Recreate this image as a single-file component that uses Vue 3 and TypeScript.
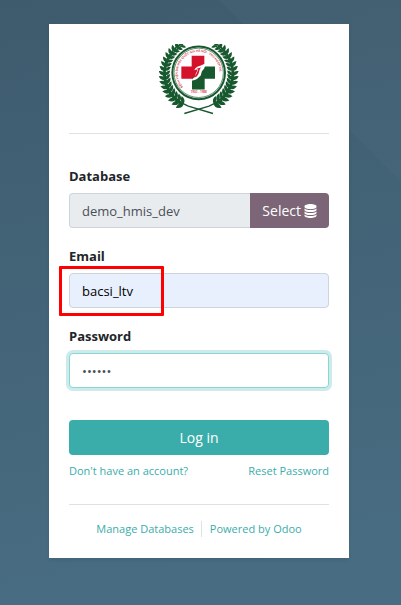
<script setup lang="ts">
import { ref } from 'vue'

interface Leaf {
  x: number
  y: number
  angle: number
  scale: number
}

const database = ref('demo_hmis_dev')
const email = ref('bacsi_ltv')
const password = ref('123456')

const centerX = 119
const centerY = 86

// Leaves of the left laurel branch, running from the foot up to the tip.
function buildBranch(): Leaf[] {
  const leaves: Leaf[] = []
  const count = 17
  for (let i = 0; i < count; i++) {
    const part = i / (count - 1)
    const degrees = 116 + part * 120
    const radians = (degrees * Math.PI) / 180
    const radius = 103 - part * 5
    const x = centerX + radius * Math.cos(radians)
    const y = centerY + radius * Math.sin(radians)
    const scale = 1.15 - part * 0.3
    leaves.push({ x, y, angle: degrees + 36, scale })
    leaves.push({ x, y, angle: degrees + 80, scale: scale * 0.8 })
    leaves.push({ x, y, angle: degrees + 140, scale: scale * 0.9 })
  }
  return leaves
}

const branch = buildBranch()
</script>

<template>
  <main class="page">
    <section class="card">
      <header class="brand">
        <svg class="logo" viewBox="0 0 240 212" role="img" aria-label="VNU Hospital">
          <defs>
            <path id="ring-text" d="M72 128 A63 63 0 1 1 166 128" />
            <g id="laurel">
              <path class="stem" d="M162 208 L88 186 Q24 160 18 86 Q22 34 68 6" />
              <path
                v-for="(leaf, index) in branch"
                :key="index"
                d="M0 0 Q9 -11 23 0 Q10 10 0 0Z"
                :transform="`translate(${leaf.x} ${leaf.y}) rotate(${leaf.angle}) scale(${leaf.scale})`"
              />
            </g>
          </defs>
          <g class="green">
            <use href="#laurel" />
            <use href="#laurel" transform="translate(238 0) scale(-1 1)" />
          </g>
          <circle class="ring" cx="119" cy="86" r="79" />
          <circle class="ring-thin" cx="119" cy="86" r="74" />
          <text class="ring-label"><textPath href="#ring-text">BỆNH VIỆN ĐẠI HỌC QUỐC GIA HÀ NỘI · VNU HOSPITAL</textPath></text>
          <path class="red" d="M98 35H136V66L102 104H67V67H98Z" />
          <path class="green" d="M136 67H168V104H137V136H99V104L118 86Z" />
          <path class="hand" d="M139 58 C125 66 111 65 106 78 L115 75 C116 83 108 87 110 95 C106 101 99 104 96 110 C108 109 116 105 121 98 C128 94 126 87 129 81 C134 75 138 73 139 58Z" />
          <path class="red" d="M113 74 L126 70 C119 78 122 88 113 97 L105 101 C114 91 113 84 118 77Z" />
          <text class="year" x="119" y="148">1902 - 1988</text>
        </svg>
      </header>

      <form class="form" @submit.prevent>
        <div class="field">
          <label for="database">Database</label>
          <div class="group">
            <input id="database" v-model="database" class="control locked" type="text" readonly />
            <button class="select" type="button">
              Select
              <svg class="stack" viewBox="0 0 12 14" aria-hidden="true">
                <path d="M0 2.2C0 1 2.7 0 6 0s6 1 6 2.2v.9C12 4.3 9.300 5.200 6 5.200S0 4.300 0 3.100z" />
                <path d="M0 4.600C1.300 5.600 3.600 6.100 6 6.100s4.700-.5 6-1.500V6C12 7.200 9.300 8.100 6 8.100S0 7.200 0 6z" />
                <path d="M0 7.500C1.300 8.500 3.600 9 6 9s4.700-.5 6-1.500v1.400C12 10.100 9.300 11 6 11S0 10.100 0 8.900z" />
                <path d="M0 10.400c1.300 1 3.600 1.500 6 1.500s4.700-.5 6-1.500v1.400C12 13 9.300 14 6 14s-6-1-6-2.200z" />
              </svg>
            </button>
          </div>
        </div>

        <div class="field">
          <label for="email">Email</label>
          <div class="marked">
            <input id="email" v-model="email" class="control filled" type="text" />
            <span class="marker"></span>
          </div>
        </div>

        <div class="field">
          <label for="password">Password</label>
          <input id="password" v-model="password" class="control active" type="password" />
        </div>

        <button class="login" type="submit">Log in</button>

        <nav class="links">
          <a href="#signup">Don't have an account?</a>
          <a href="#reset">Reset Password</a>
        </nav>
      </form>

      <footer class="footer">
        <a href="#databases">Manage Databases</a>
        <a class="powered" href="#odoo">Powered by Odoo</a>
      </footer>
    </section>
  </main>
</template>

<style>
body {
  margin: 0;
}
</style>

<style scoped>
.page,
.page * {
  box-sizing: border-box;
}

.page {
  min-height: 100vh;
  padding: 24px 3px 24px 0;
  background:
    linear-gradient(225deg, rgba(255, 255, 255, 0.02) 128px, transparent 129px),
    linear-gradient(170deg, #3e5b6d, #486c82 90%);
  font-family: 'Open Sans', 'Noto Sans', sans-serif;
  font-size: 14px;
  line-height: 21px;
  color: #212529;
}

.card {
  width: 300px;
  max-width: 100%;
  margin: 0 auto;
  padding: 20px;
  background: #fff;
  box-shadow: 0 2px 4px rgba(0, 0, 0, 0.08);
}

.brand {
  display: flex;
  justify-content: center;
  padding-bottom: 18px;
  border-bottom: 1px solid #dee2e6;
}

.logo {
  display: block;
  width: 80px;
  height: 71px;
}

.green {
  fill: #17582f;
}

.red {
  fill: #d5122b;
}

.stem {
  fill: none;
  stroke: #17582f;
  stroke-width: 4;
}

.ring {
  fill: #fff;
  stroke: #17582f;
  stroke-width: 6;
}

.ring-thin {
  fill: none;
  stroke: #17582f;
  stroke-width: 2;
}

.ring-label,
.year {
  fill: #d5122b;
  font-size: 9px;
  font-weight: 600;
}

.year {
  text-anchor: middle;
}

.hand {
  fill: #fff;
}

.form {
  display: flex;
  flex-direction: column;
  gap: 18px;
  padding-top: 32px;
}

.field {
  display: flex;
  flex-direction: column;
  gap: 6px;
}

label {
  font-size: 13px;
  font-weight: 700;
}

.control {
  width: 100%;
  min-width: 0;
  height: 35px;
  padding: 6px 12px;
  border: 1px solid #ced4da;
  border-radius: 4px;
  background: #fff;
  color: #495057;
  font: inherit;
  font-size: 13px;
  outline: none;
}

.group {
  display: flex;
}

.locked {
  flex: 1;
  border-right: 0;
  border-radius: 4px 0 0 4px;
  background: #e9ecef;
}

.filled {
  display: block;
  background: #e8f0fe;
  color: #000;
}

.active {
  border-color: #8ad6d4;
  box-shadow: 0 0 0 3px #cdebea;
}

.marked {
  position: relative;
}

.marker {
  position: absolute;
  top: -7px;
  left: -10px;
  width: 105px;
  height: 50px;
  border: 3px solid #f00;
  border-radius: 1px;
  pointer-events: none;
}

.select,
.login {
  height: 35px;
  padding: 6px 12px;
  border: 0;
  border-radius: 4px;
  color: #fff;
  font: inherit;
}

.select {
  display: flex;
  align-items: center;
  gap: 3px;
  border-radius: 0 4px 4px 0;
  background: #7c6576;
}

.stack {
  width: 13px;
  height: 14px;
  fill: currentColor;
}

.login {
  margin-top: 14px;
  background: #3aadaa;
}

.links {
  display: flex;
  justify-content: space-between;
  margin-top: -10px;
  font-size: 11px;
  line-height: 16px;
}

a {
  color: #3aadaa;
  text-decoration: none;
}

.footer {
  display: flex;
  justify-content: center;
  margin-top: 25px;
  padding: 16px 0 1px;
  border-top: 1px solid #dee2e6;
  font-size: 11px;
  line-height: 16px;
}

.powered {
  margin-left: 7px;
  padding-left: 8px;
  border-left: 1px solid #dee2e6;
}
</style>
